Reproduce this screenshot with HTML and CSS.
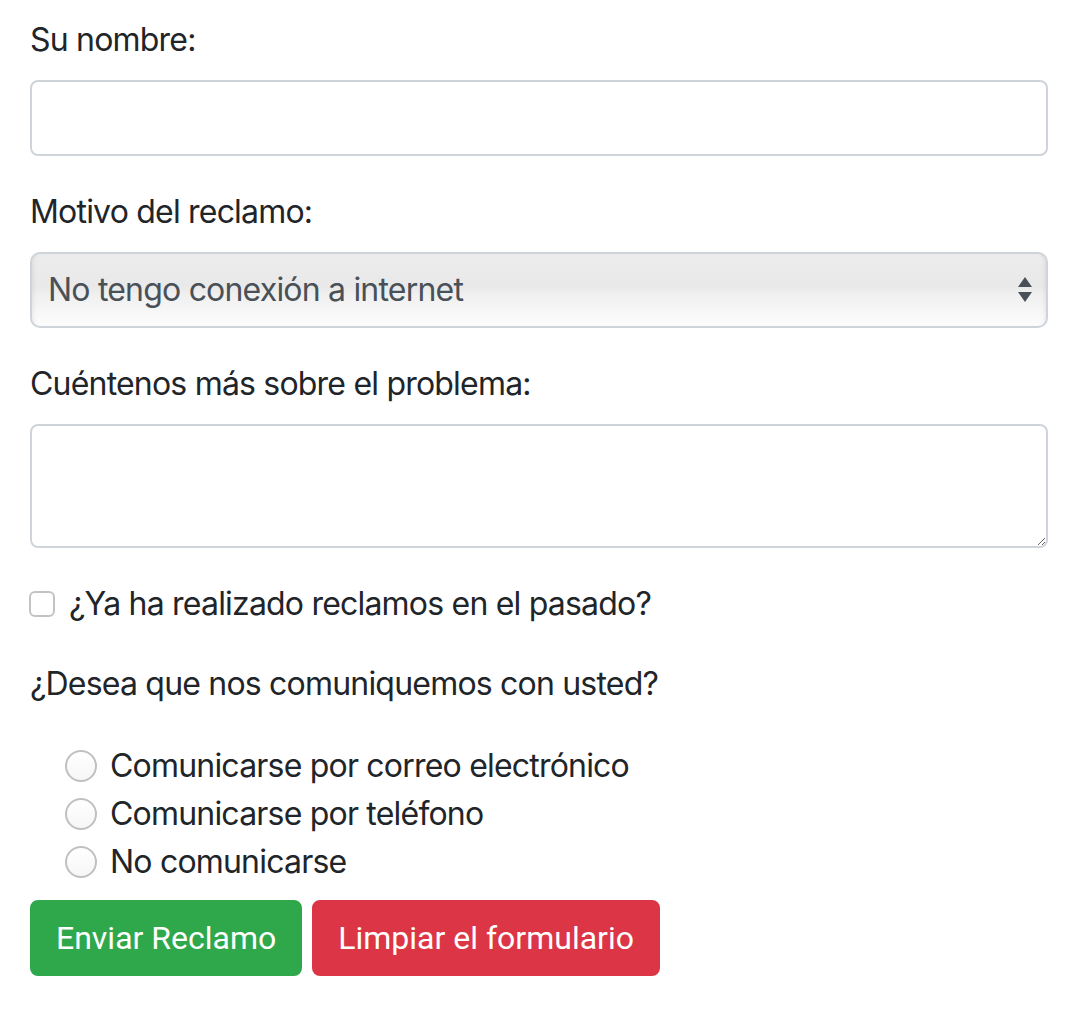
FILE: index.html
```html
<!DOCTYPE html>
<html lang="es">
<head>
<meta charset="utf-8">
<title>Reclamo</title>
<link rel="stylesheet" href="styles.css">
</head>
<body>
<form class="form">
  <div class="group">
    <label class="label" for="nombre">Su nombre:</label>
    <input class="control" id="nombre" type="text">
  </div>
  <div class="group">
    <label class="label" for="motivo">Motivo del reclamo:</label>
    <div class="select">
      <span class="select-text">No tengo conexión a internet</span>
      <svg class="select-arrows" width="14" height="26" viewBox="0 0 14 26"><path d="M7 0 L14 10 L0 10 Z M0 15 L14 15 L7 25 Z" fill="#495057"/></svg>
    </div>
  </div>
  <div class="group">
    <label class="label" for="detalle">Cuéntenos más sobre el problema:</label>
    <textarea class="control area" id="detalle" rows="2"></textarea>
  </div>
  <div class="group check-row">
    <span class="checkbox"></span>
    <span class="check-label">¿Ya ha realizado reclamos en el pasado?</span>
  </div>
  <div class="label">¿Desea que nos comuniquemos con usted?</div>
  <div class="radios">
    <div class="radio-row"><span class="radio"></span><span>Comunicarse por correo electrónico</span></div>
    <div class="radio-row"><span class="radio"></span><span>Comunicarse por teléfono</span></div>
    <div class="radio-row"><span class="radio"></span><span>No comunicarse</span></div>
  </div>
  <div class="buttons">
    <button type="button" class="btn btn-success">Enviar Reclamo</button>
    <button type="button" class="btn btn-danger">Limpiar el formulario</button>
  </div>
</form>
</body>
</html>
```

FILE: styles.css
```css
html, body {
  margin: 0;
  padding: 0;
  background: #fff;
}
body {
  font-family: Inter, "Liberation Sans", sans-serif;
  font-size: 32px;
  line-height: 48px;
  letter-spacing: -0.8px;
  color: #212529;
}
.form {
  width: 1018px;
  padding: 16px 0 0 30px;
}
.group {
  margin-bottom: 32px;
}
.label {
  display: block;
  margin-bottom: 16px;
}
.control {
  display: block;
  box-sizing: border-box;
  width: 100%;
  height: 76px;
  margin: 0;
  padding: 12px 24px;
  font: inherit;
  color: #495057;
  background: #fff;
  border: 2px solid #ced4da;
  border-radius: 8px;
  outline: none;
}
.area {
  height: 124px;
  resize: vertical;
}
.select {
  box-sizing: border-box;
  height: 76px;
  display: flex;
  align-items: center;
  justify-content: space-between;
  padding: 0 14px 0 16px;
  border: 2px solid #ced4da;
  border-radius: 10px;
  color: #495057;
  background: linear-gradient(#ececec 0%, #e9e9e9 45%, #efefef 55%, #fdfdfd 100%);
  box-shadow: inset 4px 0 4px -3px rgba(0,0,0,0.08), inset -4px 0 4px -3px rgba(0,0,0,0.08);
}
.select-arrows {
  display: block;
}
.check-row {
  display: flex;
  align-items: center;
  gap: 14px;
}
.checkbox {
  box-sizing: border-box;
  width: 26px;
  height: 26px;
  margin-left: -1px;
  border: 2px solid #c3c3c3;
  border-radius: 6px;
  background: #fff;
}
.radios {
  padding: 18px 0 0 35px;
}
.radio-row {
  display: flex;
  align-items: center;
  gap: 13px;
  height: 48px;
}
.radio {
  box-sizing: border-box;
  width: 32px;
  height: 32px;
  border-radius: 50%;
  border: 2px solid #c0c0c0;
  background: linear-gradient(#fff, #f6f6f6);
}
.buttons {
  display: flex;
  gap: 10px;
  margin-top: 14px;
}
.btn {
  box-sizing: border-box;
  height: 76px;
  padding: 0 24px;
  border: 2px solid transparent;
  border-radius: 8px;
  font-family: Roboto, "Liberation Sans", sans-serif;
  font-size: 32px;
  letter-spacing: 0;
  color: #fff;
  cursor: pointer;
}
.btn-success {
  background: #2ea84a;
  border-color: #2ea84a;
}
.btn-danger {
  background: #dc3545;
  border-color: #dc3545;
}
```
